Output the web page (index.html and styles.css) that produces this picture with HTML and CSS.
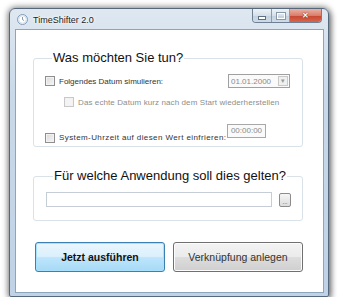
FILE: index.html
```html
<!DOCTYPE html>
<html><head><meta charset="utf-8"><title>TimeShifter 2.0</title>
<link rel="stylesheet" href="styles.css">
</head><body>
<div class="window">
   <div class="titlebar">
      <svg class="appicon" width="11" height="11" viewBox="0 0 11 11">
         <circle cx="5.5" cy="5.5" r="5" fill="#eef3f8" stroke="#7f9bb8" stroke-width="1"/>
         <circle cx="5.5" cy="5.5" r="3.6" fill="#fff" stroke="#c6d5e4" stroke-width=".6"/>
         <path d="M5.5 3v2.6l1.6 1" fill="none" stroke="#6a7f95" stroke-width=".8"/>
      </svg>
      <span class="title">TimeShifter 2.0</span>
      <div class="caption">
         <span class="cb min"><i></i></span>
         <span class="cb max"><i></i></span>
         <span class="cb close">&#x2715;</span>
      </div>
   </div>
   <div class="client">
      <fieldset class="group g1">
         <legend>Was möchten Sie tun?</legend>
         <div class="row r1">
            <span class="check"></span>
            <span class="label">Folgendes Datum simulieren:</span>
            <span class="ctl">
               <span class="combo"><span class="val">01.01.2000</span><span class="drop">&#x25BE;</span></span>
            </span>
         </div>
         <div class="row r2">
            <span class="check off"></span>
            <span class="label off">Das echte Datum kurz nach dem Start wiederherstellen</span>
         </div>
         <div class="row r3">
            <span class="check"></span>
            <span class="label">System-Uhrzeit auf diesen Wert einfrieren:</span>
            <span class="ctl">
               <span class="time">00:00:00</span>
            </span>
         </div>
      </fieldset>
      <fieldset class="group g2">
         <legend>Für welche Anwendung soll dies gelten?</legend>
         <div class="row r4">
            <span class="path"></span>
            <span class="browse">...</span>
         </div>
      </fieldset>
      <div class="buttons">
         <span class="btn default">Jetzt ausführen</span>
         <span class="btn">Verknüpfung anlegen</span>
      </div>
   </div>
</div>
</body></html>
```

FILE: styles.css
```css
body
{
	margin     : 0;
	background : #fff;
	font-family: "Liberation Sans", Arial, sans-serif;
	color      : #222;
}
.window
{
	margin        : 8px 0 0 9px;
	width         : 309px;
	height        : 284px;
	border        : 1px solid #55687c;
	border-radius : 6px 6px 2px 2px;
	padding       : 0 4px 3px 5px;
	display       : flex;
	flex-direction: column;
	background    : linear-gradient(#dfe8f1, #c9d9e9 30%, #bfd2e6);
	box-shadow    : 0 0 6px 1px rgba(0,0,0,.45), 2px 3px 6px rgba(0,0,0,.35);
}
.titlebar
{
	height     : 20px;
	display    : flex;
	align-items: center;
}
.appicon { margin: 1px 5px 0 2px; }
.title
{
	font-size  : 9px;
	color      : #1a1a1a;
	text-shadow: 0 0 4px #fff, 0 0 2px #fff;
	margin-top : 1px;
}
.caption
{
	margin-left  : auto;
	margin-right : 2px;
	align-self   : flex-start;
	display      : flex;
	height       : 13px;
	border       : 1px solid #6e8094;
	border-top   : 0;
	border-radius: 0 0 4px 4px;
	overflow     : hidden;
}
.cb
{
	display        : flex;
	align-items    : center;
	justify-content: center;
	width          : 18px;
	background     : linear-gradient(#edf2f7, #d6e0eb 50%, #c3d1df 51%, #cfdbe7);
	border-right   : 1px solid #8c9cad;
}
.cb.min i { width: 6px; height: 2px; background: #fff; border: 1px solid #5d6f82; margin-top: 4px; }
.cb.max i { width: 6px; height: 4px; border: 1px solid #fff; outline: 1px solid #8898a8; }
.cb.max { width: 17px; }
.cb.close
{
	width       : 31px;
	border-right: 0;
	font-size   : 8px;
	font-weight : bold;
	color       : #fff;
	text-shadow : 0 0 1px #7a1d10, 0 0 1px #7a1d10;
	background  : linear-gradient(#eab1a5, #d97e6b 50%, #c7452f 51%, #d6674c);
}
.client
{
	flex          : 1;
	background    : #fff;
	border        : 1px solid #8ea4ba;
	padding       : 20px 20px 0 17px;
	display       : flex;
	flex-direction: column;
}
.group
{
	margin       : 0;
	border       : 1px solid #d9e2e9;
	border-radius: 3px;
	min-width    : 0;
}
.group legend
{
	font-size  : 13px;
	line-height: 16px;
	padding    : 0 1px;
	margin-left: 7px;
	color      : #111;
	white-space: nowrap;
}
.g1 { padding: 8px 12px 2px 11px; }
.g2 { margin-top: 21px; padding: 8px 11px 13px 12px; }
.row { display: flex; align-items: center; font-size: 8px; }
.r1 { height: 14px; }
.r2 { height: 12px; margin-top: 8px; padding-left: 19px; }
.r2 .label { letter-spacing: .1px; }
.r3 { height: 20px; margin-top: 16px; align-items: flex-start; }
.r3 .check { margin-top: 9px; }
.r3 .label { margin-top: 9px; line-height: 10px; letter-spacing: .4px; }
.check
{
	width        : 8px;
	height       : 8px;
	border       : 1px solid #8f8f8f;
	background   : linear-gradient(135deg, #d9d9d9, #f6f6f6);
	box-shadow   : inset 0 0 0 1px #f2f2f2;
	margin-right : 4px;
	flex         : none;
}
.check.off { border-color: #c8c8c8; background: #f4f4f4; }
.label { color: #333; white-space: nowrap; }
.label.off { color: #8d8d8d; }
.ctl { margin-left: auto; width: 62px; display: flex; flex: none; }
.combo
{
	width      : 60px;
	height     : 12px;
	border     : 1px solid #a0a0a0;
	display    : flex;
	align-items: center;
	color      : #8a8a8a;
	background : #fafafa;
}
.combo .val { padding-left: 2px; flex: 1; }
.combo .drop
{
	width       : 10px;
	height      : 10px;
	margin-right: 1px;
	border      : 1px solid #c8c8c8;
	box-sizing  : border-box;
	font-size   : 7px;
	line-height : 8px;
	text-align  : center;
	color       : #999;
	background  : #f0f0f0;
}
.time
{
	width      : 37px;
	height     : 12px;
	line-height: 12px;
	border     : 1px solid #a8a8a8;
	color      : #8a8a8a;
	text-align : center;
	margin-left: -1px;
	background : #fafafa;
}
.r4 { height: 15px; }
.path
{
	flex      : 1;
	height    : 13px;
	border    : 1px solid #c5ced6;
	background: #fff;
}
.browse
{
	width        : 10px;
	height       : 12px;
	margin-left  : 7px;
	border       : 1px solid #8c8c8c;
	border-radius: 2px;
	background   : linear-gradient(#f6f6f6, #dcdcdc);
	font-size    : 6px;
	line-height  : 16px;
	text-align   : center;
	color        : #333;
}
.buttons
{
	display     : flex;
	gap         : 8px;
	margin-top  : 21px;
	padding-left: 2px;
}
.btn
{
	width          : 128px;
	height         : 28px;
	border         : 1px solid #707070;
	border-radius  : 3px;
	display        : flex;
	align-items    : center;
	justify-content: center;
	font-size      : 10.5px;
	color          : #333;
	background     : linear-gradient(#f3f3f3, #ebebeb 50%, #dddddd 51%, #cfcfcf);
	box-shadow     : inset 0 0 0 1px #fcfcfc;
}
.btn.default
{
	border-color: #3c7fb1;
	font-weight : bold;
	color       : #111;
	background  : linear-gradient(#eaf6fd, #d9f0fc 50%, #bee6fd 51%, #a7d9f5);
	box-shadow  : inset 0 0 0 1px #a6e2fd;
}
```
